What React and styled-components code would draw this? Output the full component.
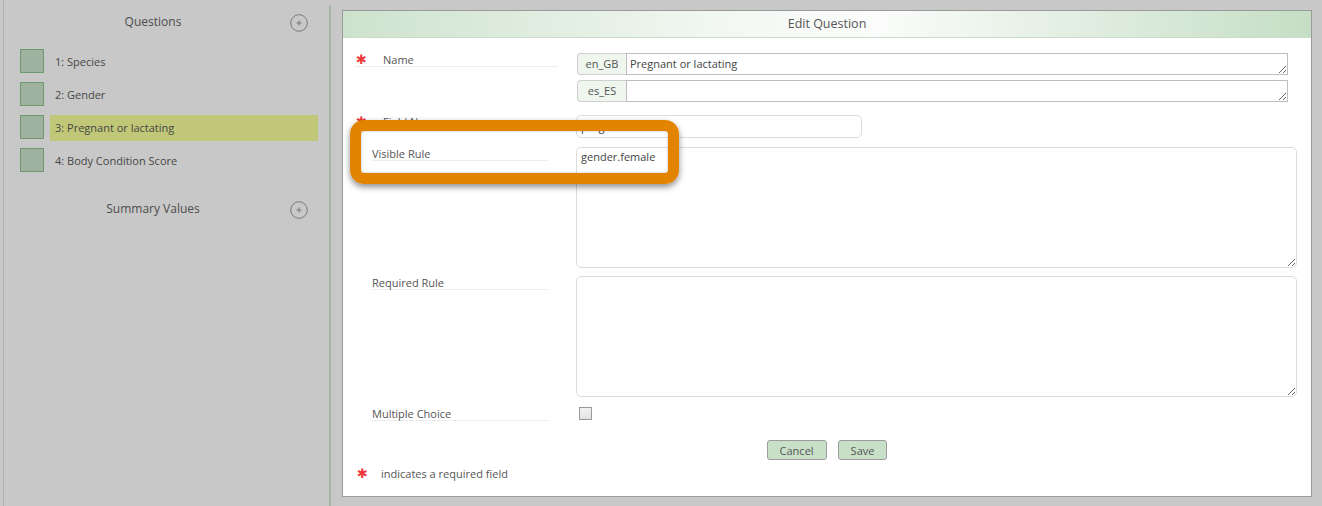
import React from "react";
import styled, { createGlobalStyle } from "styled-components";

const GlobalStyle = createGlobalStyle`
  body {
    margin: 0;
    background: #c8c8c8;
    font-family: "Open Sans", "Liberation Sans", sans-serif;
    font-size: 11px;
    color: #4a4a4a;
  }
`;

const Page = styled.div`
  display: flex;
  height: 506px;
  overflow: hidden;
`;

const Sidebar = styled.aside`
  width: 327px;
  margin-left: 3px;
  border-left: 1px solid #a9b6a9;
  display: flex;
`;

const SidebarInner = styled.div`
  flex: 1;
  margin-top: 5px;
  border-right: 2px solid #a3b8a3;
`;

const SectionHeader = styled.div`
  display: flex;
  align-items: center;
  height: 32px;
  padding: 0 21px 0 12px;
  margin-top: ${(p) => p.$top || 0}px;
`;

const SectionTitle = styled.div`
  flex: 1;
  text-align: center;
  font-size: 12px;
  color: #4d4d4d;
`;

const PlusButton = styled.button`
  width: 18px;
  height: 18px;
  padding: 0;
  border: none;
  background: none;
  display: flex;
  margin-top: ${(p) => p.$offset || 0}px;
`;

const ItemList = styled.ul`
  list-style: none;
  margin: 12px 0 0;
  padding: 0 0 0 16px;
  display: flex;
  flex-direction: column;
  gap: 7px;
`;

const Item = styled.li`
  display: flex;
  align-items: flex-start;
  height: 26px;
`;

const Swatch = styled.span`
  width: 22px;
  height: 22px;
  border: 1px solid #6e9a6e;
  background: #9fb19f;
`;

const ItemLabel = styled.span`
  margin-left: 6px;
  padding-left: 5px;
  width: 263px;
  height: 26px;
  line-height: 26px;
  color: #474747;
  background: ${(p) => (p.$active ? "#c0c877" : "transparent")};
`;

const Main = styled.main`
  position: relative;
  margin: 10px 0 0 11px;
  width: 968px;
  height: 485px;
  border: 1px solid #9a9a9a;
  background: #fff;
`;

const PanelHeader = styled.div`
  height: 26px;
  line-height: 26px;
  text-align: center;
  font-size: 12.5px;
  color: #555;
  border-bottom: 1px solid #c9dcc9;
  background: linear-gradient(to right, #cde2cd 0%, #f3f8f3 40%, #fbfcfb 55%, #c5dec5 100%);
`;

const FormBody = styled.div`
  padding-top: 15px;
`;

const FormRow = styled.div`
  display: grid;
  grid-template-columns: 233px 1fr;
  align-items: start;
  margin-bottom: ${(p) => p.$gap}px;
`;

const Label = styled.div`
  display: flex;
  align-items: center;
  margin-left: ${(p) => (p.$required ? 12 : 29)}px;
  width: ${(p) => (p.$required ? 203 : 176)}px;
  height: 13px;
  line-height: 13px;
  border-bottom: 1px solid #ececec;
  color: #555;
`;

const Star = styled.span`
  width: 28px;
  padding-left: 1px;
  box-sizing: border-box;
  color: #ec3a3c;
  font-family: "DejaVu Sans", sans-serif;
  font-size: 13px;
  font-weight: bold;
  line-height: 13px;
`;

const LangGroup = styled.div`
  display: flex;
  flex-direction: column;
  gap: 5px;
  padding-left: 1px;
`;

const LangRow = styled.div`
  display: flex;
  height: 22px;
`;

const LangTag = styled.span`
  width: 48px;
  border: 1px solid #cfcfcf;
  border-right: none;
  border-radius: 4px 0 0 4px;
  background: #eef6ee;
  color: #555;
  text-align: center;
  line-height: 20px;
`;

const LangText = styled.textarea`
  box-sizing: border-box;
  width: 662px;
  height: 22px;
  margin: 0;
  padding: 3px 3px;
  border: 1px solid #bdbdbd;
  font: inherit;
  color: #444;
  line-height: 14px;
  overflow: hidden;
`;

const TextInput = styled.input`
  box-sizing: border-box;
  width: 286px;
  height: 23px;
  margin: 0;
  padding: 0 4px;
  border: 1px solid #dcdcdc;
  border-radius: 5px;
  font: inherit;
  color: #444;
`;

const RuleText = styled.textarea`
  box-sizing: border-box;
  width: 721px;
  height: 121px;
  margin: 0;
  padding: 2px 4px;
  border: 1px solid #dcdcdc;
  border-radius: 5px;
  font: inherit;
  color: #444;
  line-height: 14px;
`;

const Check = styled.input`
  appearance: none;
  box-sizing: border-box;
  width: 13px;
  height: 13px;
  margin: 0 0 0 3px;
  border: 1px solid #9a9a9a;
  background: linear-gradient(#f2f2f2, #e2e2e2);
`;

const Actions = styled.div`
  display: flex;
  justify-content: center;
  gap: 11px;
  margin-top: 19px;
`;

const Button = styled.button`
  height: 20px;
  padding: 0 ${(p) => p.$pad}px;
  border: 1px solid #9c9c9c;
  border-radius: 3px;
  background: #c8e0c8;
  font: inherit;
  color: #555;
`;

const Footnote = styled.div`
  display: flex;
  align-items: center;
  margin: 6px 0 0 14px;
  height: 14px;
  color: #555;
`;

const FootStar = styled(Star)`
  width: 24px;
  padding-left: 0;
`;

const Callout = styled.div`
  position: absolute;
  left: 7px;
  top: 109px;
  width: 307px;
  height: 42px;
  border: 11px solid #e38400;
  border-radius: 14px;
  box-shadow: 0 3px 6px rgba(0, 0, 0, 0.45), inset 0 0 3px rgba(0, 0, 0, 0.25);
  pointer-events: none;
`;

const PlusIcon = () => (
  <svg width="18" height="18" viewBox="0 0 18 18">
    <circle cx="9" cy="9" r="8.3" fill="none" stroke="#7a7a7a" strokeWidth="1" />
    <path d="M9 6.5v5M6.5 9h5" stroke="#7a7a7a" strokeWidth="1.1" />
  </svg>
);

const questions = [
  { id: 1, text: "1: Species" },
  { id: 2, text: "2: Gender" },
  { id: 3, text: "3: Pregnant or lactating", active: true },
  { id: 4, text: "4: Body Condition Score" },
];

export default function App() {
  return (
    <Page>
      <GlobalStyle />
      <Sidebar>
        <SidebarInner>
          <SectionHeader>
            <SectionTitle>Questions</SectionTitle>
            <PlusButton $offset={3}>
              <PlusIcon />
            </PlusButton>
          </SectionHeader>
          <ItemList>
            {questions.map((q) => (
              <Item key={q.id}>
                <Swatch />
                <ItemLabel $active={q.active}>{q.text}</ItemLabel>
              </Item>
            ))}
          </ItemList>
          <SectionHeader $top={18}>
            <SectionTitle>Summary Values</SectionTitle>
            <PlusButton $offset={3}>
              <PlusIcon />
            </PlusButton>
          </SectionHeader>
        </SidebarInner>
      </Sidebar>

      <Main>
        <PanelHeader>Edit Question</PanelHeader>
        <FormBody>
          <FormRow $gap={13}>
            <Label $required>
              <Star>✱</Star>Name
            </Label>
            <LangGroup>
              <LangRow>
                <LangTag>en_GB</LangTag>
                <LangText defaultValue="Pregnant or lactating" />
              </LangRow>
              <LangRow>
                <LangTag>es_ES</LangTag>
                <LangText defaultValue="" />
              </LangRow>
            </LangGroup>
          </FormRow>
          <FormRow $gap={9}>
            <Label $required>
              <Star>✱</Star>Field Name
            </Label>
            <TextInput defaultValue="pregnant" />
          </FormRow>
          <FormRow $gap={8}>
            <Label>Visible Rule</Label>
            <RuleText defaultValue="gender.female" />
          </FormRow>
          <FormRow $gap={10}>
            <Label>Required Rule</Label>
            <RuleText defaultValue="" />
          </FormRow>
          <FormRow $gap={0}>
            <Label>Multiple Choice</Label>
            <Check type="checkbox" />
          </FormRow>
          <Actions>
            <Button $pad={12}>Cancel</Button>
            <Button $pad={12}>Save</Button>
          </Actions>
          <Footnote>
            <FootStar>✱</FootStar>indicates a required field
          </Footnote>
        </FormBody>
        <Callout />
      </Main>
    </Page>
  );
}
